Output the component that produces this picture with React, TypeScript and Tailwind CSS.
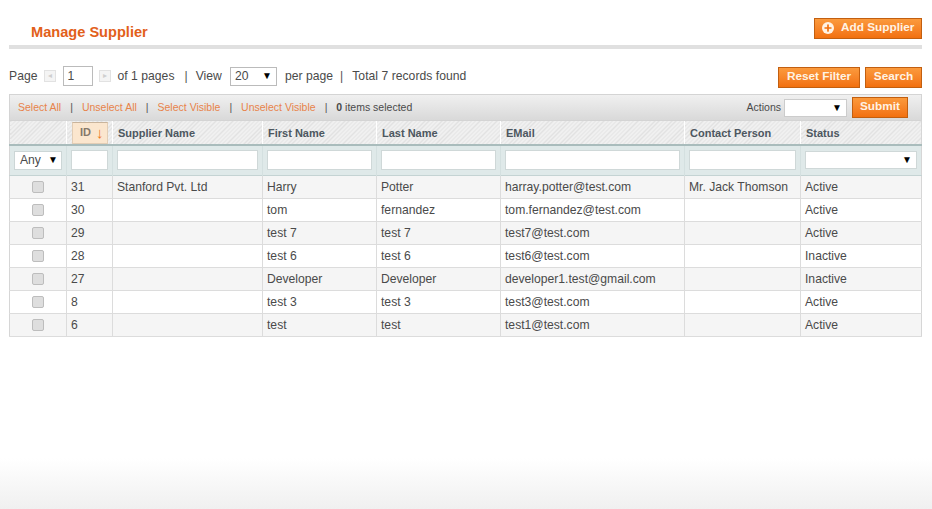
import { Plus } from "lucide-react";

interface Supplier {
  id: number;
  name: string;
  first: string;
  last: string;
  email: string;
  contact: string;
  status: string;
}

const suppliers: Supplier[] = [
  { id: 31, name: "Stanford Pvt. Ltd", first: "Harry", last: "Potter", email: "harray.potter@test.com", contact: "Mr. Jack Thomson", status: "Active" },
  { id: 30, name: "", first: "tom", last: "fernandez", email: "tom.fernandez@test.com", contact: "", status: "Active" },
  { id: 29, name: "", first: "test 7", last: "test 7", email: "test7@test.com", contact: "", status: "Active" },
  { id: 28, name: "", first: "test 6", last: "test 6", email: "test6@test.com", contact: "", status: "Inactive" },
  { id: 27, name: "", first: "Developer", last: "Developer", email: "developer1.test@gmail.com", contact: "", status: "Inactive" },
  { id: 8, name: "", first: "test 3", last: "test 3", email: "test3@test.com", contact: "", status: "Active" },
  { id: 6, name: "", first: "test", last: "test", email: "test1@test.com", contact: "", status: "Active" },
];

const columnWidths = ["w-[57px]", "w-[46px]", "w-[150px]", "w-[114px]", "w-[124px]", "w-[184px]", "w-[116px]", "w-[121px]"];

const orangeButton =
  "h-[21px] border border-[#c25f10] bg-gradient-to-b from-[#fb9a3c] to-[#f2700d] pb-[1px] text-[11.8px] font-bold text-[#fff3e4]";

const hatch =
  "bg-[repeating-linear-gradient(135deg,#e2e2e2_0px,#e2e2e2_1px,#f0f0f0_1px,#f0f0f0_3px)]";

const Arrow = () => <span className="text-[10px] leading-none text-black">▼</span>;

const HeaderCell = ({ label }: { label: string }) => (
  <th className={`h-[24px] border-l border-white p-0 pt-[1px] pl-[5px] text-left text-[11px] font-bold text-[#4d5760] ${hatch}`}>
    {label}
  </th>
);

const FilterInput = () => (
  <td className="border-l border-[#d4e0e0] p-0 px-[4px]">
    <div className="h-[20px] border border-[#cfd8d8] bg-white" />
  </td>
);

const PagerArrow = ({ glyph }: { glyph: string }) => (
  <span className="flex h-[12px] w-[12px] items-center justify-center border border-[#e2e2e2] bg-[#f4f4f4] text-[8px] leading-none text-[#cfcfcf]">
    {glyph}
  </span>
);

const Separator = () => <span className="text-[#555]">|</span>;

export default function App() {
  return (
    <div className="relative h-[509px] w-[932px] overflow-hidden bg-gradient-to-b from-white from-[90%] to-[#f0f0f0] font-['Liberation_Sans',Arial,sans-serif] text-[12.15px] text-[#4a4a4a]">
      <div className="px-[10px] pl-[9px]">
        <div className="flex h-[49px] items-start justify-between border-b-[4px] border-[#e0e0e0] pt-[18px]">
          <h1 className="pl-[22px] pt-[5px] text-[14.6px] leading-[18px] font-bold text-[#e2601a]">Manage Supplier</h1>
          <button className={`${orangeButton} flex w-[108px] items-center pl-[7px]`}>
            <span className="flex h-[12px] w-[12px] items-center justify-center rounded-full bg-[#fff3e4]">
              <Plus size={10} strokeWidth={4} className="text-[#f2700d]" />
            </span>
            <span className="ml-[7px]">Add Supplier</span>
          </button>
        </div>

        <div className="flex h-[45px] items-start justify-between pt-[18px]">
          <div className="-mt-[1px] flex items-center tracking-[0.03px]">
            <span>Page</span>
            <span className="ml-[7px]"><PagerArrow glyph="◂" /></span>
            <span className="ml-[7px] flex h-[20px] w-[30px] items-center border border-[#bbb] pl-[3px]">1</span>
            <span className="ml-[6px]"><PagerArrow glyph="▸" /></span>
            <span className="ml-[6px]">of 1 pages</span>
            <span className="ml-[10px]"><Separator /></span>
            <span className="ml-[8px]">View</span>
            <span className="ml-[8px] flex h-[19px] w-[47px] items-center justify-between border border-[#bbb] pr-[4px] pl-[4px]">
              20 <Arrow />
            </span>
            <span className="ml-[8px]">per page</span>
            <span className="ml-[7px]"><Separator /></span>
            <span className="ml-[9px]">Total 7 records found</span>
          </div>
          <div className="flex gap-[5px]">
            <button className={`${orangeButton} w-[82px]`}>Reset Filter</button>
            <button className={`${orangeButton} w-[57px]`}>Search</button>
          </div>
        </div>

        <div className="flex h-[27px] items-center justify-between border border-[#d4d4d4] bg-gradient-to-b from-[#f0f0f0] to-[#d9d9d9] pr-[13px] pl-[8px] text-[10.5px]">
          <div className="flex items-center">
            <span className="text-[#e8834a]">Select All</span>
            <span className="mx-[9px]"><Separator /></span>
            <span className="text-[#e8834a]">Unselect All</span>
            <span className="mx-[9px]"><Separator /></span>
            <span className="text-[#e8834a]">Select Visible</span>
            <span className="mx-[9px]"><Separator /></span>
            <span className="text-[#e8834a]">Unselect Visible</span>
            <span className="mx-[9px]"><Separator /></span>
            <span><b>0</b> items selected</span>
          </div>
          <div className="flex items-center">
            <span>Actions</span>
            <span className="ml-[3px] flex h-[18px] w-[63px] items-center justify-end border border-[#ccc] bg-white pr-[4px]"><Arrow /></span>
            <button className={`${orangeButton} ml-[5px] w-[56px]`}>Submit</button>
          </div>
        </div>

        <table className="w-[912px] table-fixed border-collapse border-x border-b border-[#d6d6d6]">
          <colgroup>
            {columnWidths.map((width, index) => (
              <col key={index} className={width} />
            ))}
          </colgroup>
          <thead>
            <tr>
              <th className={`h-[24px] p-0 ${hatch}`} />
              <th className={`h-[24px] border-l border-white p-0 pl-[5px] ${hatch}`}>
                <div className="flex h-[22px] w-[36px] items-center gap-[5px] border border-[#e2cdb5] border-t-[#c9b49c] bg-[#fbe6ce] pl-[7px] text-[11px] font-bold text-[#85786a]">
                  ID <span className="text-[15px] leading-none font-normal text-[#ee7a22]">↓</span>
                </div>
              </th>
              {["Supplier Name", "First Name", "Last Name", "EMail", "Contact Person", "Status"].map((label) => (
                <HeaderCell key={label} label={label} />
              ))}
            </tr>
            <tr className="h-[30px] border-t-2 border-b border-t-[#a9bcbc] border-b-[#c4d3d3] bg-[#dfe9e9]">
              <td className="p-0 pl-[4px]">
                <div className="flex h-[19px] w-[48px] items-center justify-between border border-[#ccd6d6] bg-white pr-[3px] pl-[5px]">
                  Any <Arrow />
                </div>
              </td>
              <FilterInput />
              <FilterInput />
              <FilterInput />
              <FilterInput />
              <FilterInput />
              <FilterInput />
              <td className="border-l border-[#d4e0e0] p-0 pr-[4px] pl-[4px]">
                <div className="flex h-[18px] items-center justify-end border border-[#cfd8d8] bg-white pr-[4px]"><Arrow /></div>
              </td>
            </tr>
          </thead>
          <tbody>
            {suppliers.map((supplier, index) => (
              <tr key={supplier.id} className={`h-[23px] border-b border-[#dcdcdc] ${index % 2 === 0 ? "bg-[#f5f5f5]" : "bg-white"}`}>
                <td className="p-0 pt-[1px]">
                  <div className="mx-auto h-[12px] w-[12px] rounded-[2px] border border-[#bdbdbd] bg-[#dedede]" />
                </td>
                {[supplier.id, supplier.name, supplier.first, supplier.last, supplier.email, supplier.contact, supplier.status].map((value, cell) => (
                  <td key={cell} className="truncate border-l border-[#dcdcdc] p-0 pt-[2px] pl-[4px]">
                    {value}
                  </td>
                ))}
              </tr>
            ))}
          </tbody>
        </table>
      </div>
    </div>
  );
}
